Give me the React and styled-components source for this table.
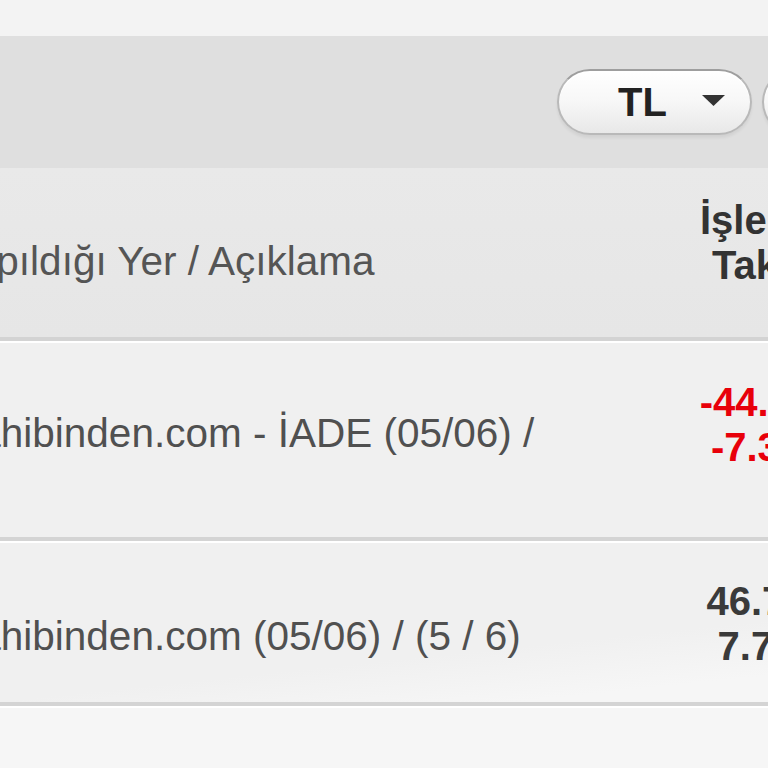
import React from "react";
import styled, { createGlobalStyle } from "styled-components";

const Global = createGlobalStyle`
  html, body { margin: 0; padding: 0; background: #f5f5f5; overflow: hidden; }
  body { font-family: "Liberation Sans", Arial, sans-serif; }
`;

const Viewport = styled.div`
  width: 768px;
  height: 768px;
  overflow: hidden;
  background: #f6f6f6;
`;

const Frame = styled.div`
  width: 1400px;
  margin-left: -300px;
`;

const TopSpace = styled.div`
  height: 36px;
  background: #f3f3f3;
`;

const Toolbar = styled.div`
  height: 132px;
  box-sizing: border-box;
  background: #dfdfdf;
  display: flex;
  align-items: center;
  gap: 10px;
  padding-left: 857px;
`;

const Pill = styled.button`
  width: 195px;
  height: 66px;
  box-sizing: border-box;
  border-radius: 33px;
  border: 2px solid #b9b9b9;
  border-top-color: #9e9e9e;
  background: linear-gradient(#ffffff 0%, #f7f7f7 50%, #e8e8e8 100%);
  box-shadow: inset 0 2px 0 #ffffff, 0 3px 3px rgba(0, 0, 0, 0.06);
  display: flex;
  align-items: center;
  gap: 35px;
  padding: 0 0 0 59px;
  font: 700 40px "Liberation Sans", Arial, sans-serif;
  color: #222;
  cursor: pointer;
`;

const Caret = styled.svg`
  width: 23px;
  height: 11px;
  margin-top: -4px;
`;

const Grid = styled.div`
  display: grid;
  grid-template-columns: 990px 193px 1fr;
`;

const HeaderRow = styled(Grid)`
  height: 169px;
  background: linear-gradient(#e9e9e9, #e6e6e6);
  border-bottom: 4px solid #d3d3d3;
`;

const Row = styled(Grid)`
  height: ${(p) => p.$h}px;
  background: ${(p) =>
    p.$sheen
      ? "linear-gradient(174deg, #f0f0f0 0%, #f0f0f0 62%, #f6f6f6 80%, #f6f6f6 100%)"
      : "#f0f0f0"};
  border-top: 2px solid #ffffff;
  border-bottom: 4px solid #d4d4d4;
`;

const Footer = styled.div`
  height: 80px;
  border-top: 2px solid #ffffff;
  background: #f6f6f6;
`;

const HeadLabel = styled.div`
  padding: ${(p) => p.$top}px 0 0 ${(p) => p.$indent}px;
  font: 400 40.5px/45px "Liberation Sans", Arial, sans-serif;
  color: #555;
  white-space: nowrap;
`;

const HeadAmount = styled.div`
  padding: ${(p) => p.$top}px 0 0 10px;
  font: 700 40px/45px "Liberation Sans", Arial, sans-serif;
  color: #333;
  white-space: nowrap;
`;

const HeadLine = styled.span`
  display: block;
  padding-left: ${(p) => p.$indent || 0}px;
`;

const Desc = styled.div`
  padding: ${(p) => p.$top}px 0 0 ${(p) => p.$indent}px;
  font: 400 40.5px/45px "Liberation Sans", Arial, sans-serif;
  color: #505050;
  white-space: nowrap;
`;

const Amount = styled.div`
  padding-top: ${(p) => p.$top}px;
  text-align: center;
  font: 700 40px/45px "Liberation Sans", Arial, sans-serif;
  color: ${(p) => (p.$neg ? "#e8000a" : "#3a3a3a")};
  white-space: nowrap;
`;

const rows = [
  {
    desc: "sahibinden.com - İADE (05/06) /",
    total: "-44.00 TL",
    inst: "-7.33 TL",
    neg: true,
    h: 194,
    descTop: 68,
    amtTop: 37,
  },
  {
    desc: "sahibinden.com (05/06) / (5 / 6)",
    total: "46.75 TL",
    inst: "7.79 TL",
    neg: false,
    h: 159,
    descTop: 71,
    amtTop: 36,
    sheen: true,
  },
];

export default function App() {
  return (
    <>
      <Global />
      <Viewport>
        <Frame>
          <TopSpace />
          <Toolbar>
            <Pill>
              TL
              <Caret viewBox="0 0 23 11">
                <polygon points="0,0 23,0 11.5,11" fill="#333" />
              </Caret>
            </Pill>
            <Pill>
              USD
              <Caret viewBox="0 0 23 11">
                <polygon points="0,0 23,0 11.5,11" fill="#333" />
              </Caret>
            </Pill>
          </Toolbar>
          <HeaderRow>
            <HeadLabel $top={71} $indent={111}>
              İşlemin Yapıldığı Yer / Açıklama
            </HeadLabel>
            <HeadAmount $top={30}>
              <HeadLine>İşlem Tutarı</HeadLine>
              <HeadLine $indent={12}>Taksit Tutarı</HeadLine>
            </HeadAmount>
            <div />
          </HeaderRow>
          {rows.map((r, i) => (
            <Row key={i} $h={r.h} $sheen={r.sheen}>
              <Desc $top={r.descTop} $indent={258}>
                {r.desc}
              </Desc>
              <Amount $top={r.amtTop} $neg={r.neg}>
                {r.total}
                <br />
                {r.inst}
              </Amount>
              <div />
            </Row>
          ))}
          <Footer />
        </Frame>
      </Viewport>
    </>
  );
}
